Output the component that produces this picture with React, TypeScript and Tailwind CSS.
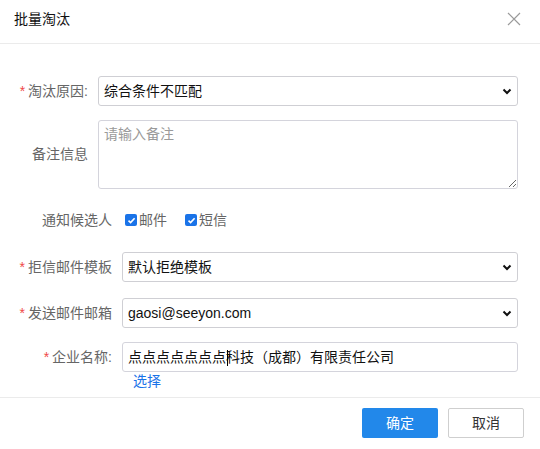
import React from "react";

const font = { fontFamily: '"Liberation Sans", "Noto Sans CJK SC", sans-serif' };

function Chevron() {
  return (
    <svg width="10" height="7" viewBox="0 0 10 7" className="shrink-0">
      <path d="M1.5 1.5 L5 5 L8.5 1.5" fill="none" stroke="#111" strokeWidth="2" />
    </svg>
  );
}

function Select({ value }: { value: string }) {
  return (
    <div className="flex h-[30px] flex-1 items-center justify-between rounded-[3px] border border-[#cfcfd4] bg-white pl-[5px] pr-[5px] text-[14px] text-[#111]">
      <span>{value}</span>
      <Chevron />
    </div>
  );
}

function Check({ label }: { label: string }) {
  return (
    <div className="flex items-center">
      <span className="flex h-[12px] w-[12px] items-center justify-center rounded-[2px] bg-[#1a73e8]">
        <svg width="9" height="9" viewBox="0 0 9 9">
          <path d="M1.5 4.6 L3.6 6.6 L7.6 2.2" fill="none" stroke="#fff" strokeWidth="1.6" />
        </svg>
      </span>
      <span className="ml-[2px] text-[14px] text-[#666]">{label}</span>
    </div>
  );
}

function Star() {
  return <span className="mr-[3px] text-[#f04848]">*</span>;
}

export default function App() {
  return (
    <div className="h-[449px] w-[540px] overflow-hidden bg-white" style={font}>
      <div className="flex h-[44px] items-start justify-between border-b border-[#ebebeb] pl-[14px] pr-[19px] pt-[11px]">
        <span className="text-[14px] leading-[16px] text-[#111]">批量淘汰</span>
        <svg width="14" height="14" viewBox="0 0 14 14" className="mt-[1px]">
          <path d="M1 1 L13 13 M13 1 L1 13" stroke="#9a9a9a" strokeWidth="1.2" />
        </svg>
      </div>

      <div className="pr-[22px] text-[14px] text-[#666]">
        <div className="mt-[32px] flex items-center">
          <div className="w-[88px] shrink-0 text-right">
            <Star />淘汰原因:
          </div>
          <div className="ml-[10px] flex flex-1">
            <Select value="综合条件不匹配" />
          </div>
        </div>

        <div className="mt-[14px] flex items-center">
          <div className="w-[88px] shrink-0 text-right">备注信息</div>
          <textarea
            className="ml-[10px] h-[69px] flex-1 rounded-[3px] border border-[#d4d4dc] px-[5px] py-[3px] text-[14px] leading-[20px] text-[#111] outline-none placeholder:text-[#9a9a9a]"
            placeholder="请输入备注"
          />
        </div>

        <div className="mt-[21px] flex h-[20px] items-center">
          <div className="w-[112px] shrink-0 text-right">通知候选人</div>
          <div className="ml-[13px] flex items-center gap-[18px]">
            <Check label="邮件" />
            <Check label="短信" />
          </div>
        </div>

        <div className="mt-[22px] flex items-center">
          <div className="w-[112px] shrink-0 text-right">
            <Star />拒信邮件模板
          </div>
          <div className="ml-[10px] flex flex-1">
            <Select value="默认拒绝模板" />
          </div>
        </div>

        <div className="mt-[16px] flex items-center">
          <div className="w-[112px] shrink-0 text-right">
            <Star />发送邮件邮箱
          </div>
          <div className="ml-[10px] flex flex-1">
            <Select value="gaosi@seeyon.com" />
          </div>
        </div>

        <div className="mt-[14px] flex items-center">
          <div className="w-[112px] shrink-0 text-right">
            <Star />企业名称:
          </div>
          <div className="relative ml-[10px] flex h-[30px] flex-1 items-center rounded-[3px] border border-[#d4d4dc] pl-[5px] text-[14px] text-[#111]">
            点点点点点点点科技（成都）有限责任公司
            <span className="absolute left-[104px] top-[7px] h-[16px] w-[1px] bg-black" />
          </div>
        </div>

        <div className="ml-[133px] mt-[1px] h-[16px] text-[14px] leading-[16px] text-[#1a73e8]">选择</div>
      </div>

      <div className="mt-[8px] flex justify-end gap-[10px] border-t border-[#ebebeb] pr-[16px] pt-[10px]">
        <button className="h-[30px] w-[76px] rounded-[2px] bg-[#2288ea] text-[14px] text-white">确定</button>
        <button className="h-[30px] w-[76px] rounded-[2px] border border-[#cfcfcf] bg-white text-[14px] text-[#333]">取消</button>
      </div>
    </div>
  );
}
